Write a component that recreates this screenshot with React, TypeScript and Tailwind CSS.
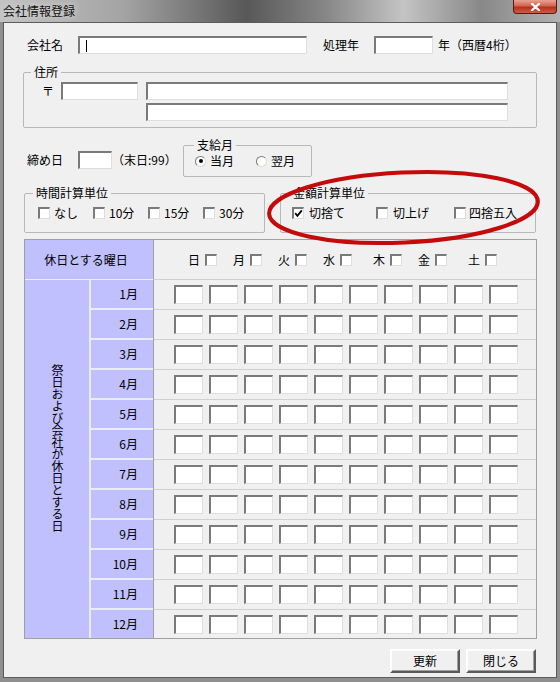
import React from 'react';

const sunken = "bg-white border-t-2 border-l-2 border-r border-b border-t-[#7a7a7a] border-l-[#7a7a7a] border-r-[#dedede] border-b-[#dedede]";

const Box = ({ className = '' }: { className?: string }) => <div className={`${sunken} ${className}`} />;

const Check = ({ checked = false }: { checked?: boolean }) => (
    <div className={`${sunken} w-[12px] h-[12px] flex items-center justify-center shrink-0`}>
        {checked && (
            <svg width="9" height="9" viewBox="0 0 9 9">
                <polyline points="1.2,4.2 3.4,6.8 7.8,1.4" fill="none" stroke="#000" strokeWidth="1.8" />
            </svg>
        )}
    </div>
);

const Radio = ({ checked = false }: { checked?: boolean }) => (
    <div className="w-[11px] h-[11px] rounded-full bg-white border border-t-[#7a7a7a] border-l-[#7a7a7a] border-r-[#dcdcdc] border-b-[#dcdcdc] flex items-center justify-center shrink-0">
        {checked && <div className="w-[4px] h-[4px] rounded-full bg-black" />}
    </div>
);

const Legend = ({ children, className = '' }: { children: React.ReactNode, className?: string }) => (
    <legend className={`px-[3px] h-[12px] leading-[12px] ${className}`}>{children}</legend>
);

const Button = ({ label }: { label: string }) => (
    <button className="w-[70px] h-[24px] bg-[#f0f0f0] border-2 border-t-white border-l-white border-r-[#5a5a5a] border-b-[#5a5a5a] shadow-[inset_-1px_-1px_0_#a0a0a0] text-[12px] leading-[12px]">
        {label}
    </button>
);

const weekdays = [
    { d: '日', cls: 'ml-[34px]' },
    { d: '月', cls: 'ml-[16px]' },
    { d: '火', cls: 'ml-[16px]' },
    { d: '水', cls: 'ml-[16px]' },
    { d: '木', cls: 'ml-[21px]' },
    { d: '金', cls: 'ml-[16px]' },
    { d: '土', cls: 'ml-[21px]' },
];

const months = Array.from({ length: 12 }, (_, i) => `${i + 1}月`);

export default function App() {
    return (
        <div className="relative w-[560px] h-[682px] bg-[#8f8f8f] flex flex-col overflow-hidden font-['Noto_Sans_CJK_JP',sans-serif] text-[12px] leading-[12px] text-black">
            {/* Title bar */}
            <div className="h-[22px] flex items-start justify-between bg-[linear-gradient(90deg,#c2c2c2_0%,#a4a4a4_22%,#585858_44%,#868686_58%,#c4c4c4_72%,#888888_86%,#b2b2b2_100%)]">
                <span className="ml-[3px] mt-[4px] text-[12px] leading-[14px] text-[#111] [text-shadow:0_0_6px_#ececec]">会社情報登録</span>
                <div className="mr-[3px] w-[44px] h-[14px] rounded-b-[4px] border border-t-0 border-[#5a1a12] bg-[linear-gradient(180deg,#e9a392_0%,#d4644e_45%,#b9301e_55%,#cc5c42_100%)] flex items-center justify-center">
                    <svg width="11" height="8" viewBox="0 0 11 8">
                        <path d="M2 0.8 L9 7.2 M9 0.8 L2 7.2" stroke="#fff" strokeWidth="2.2" strokeLinecap="round" />
                    </svg>
                </div>
            </div>

            {/* Client area */}
            <div className="mx-[3px] h-[656px] border border-[#5c5c5c] bg-[#f0f0f0] flex flex-col">
                {/* Company name row */}
                <div className="flex items-center mt-[13px] pl-[23px] h-[18px]">
                    <span className="w-[51px]">会社名</span>
                    <div className={`${sunken} w-[229px] h-[18px] flex items-center`}>
                        <span className="ml-[6px] w-px h-[12px] bg-black" />
                    </div>
                    <span className="ml-[16px] w-[51px]">処理年</span>
                    <Box className="w-[59px] h-[18px]" />
                    <span className="ml-[5px]">年（西暦4桁）</span>
                </div>

                {/* Address */}
                <fieldset className="ml-[19px] mt-[12px] w-[514px] border border-[#b8b8b8] rounded-[2px] pb-[6px]">
                    <Legend className="ml-[7px]">住所</Legend>
                    <div className="flex items-start mt-[4px]">
                        <div className="flex items-center">
                            <span className="ml-[18px] w-[19px]">〒</span>
                            <Box className="w-[77px] h-[18px]" />
                        </div>
                        <div className="ml-[8px] flex flex-col gap-[3px]">
                            <Box className="w-[362px] h-[18px]" />
                            <Box className="w-[362px] h-[18px]" />
                        </div>
                    </div>
                </fieldset>

                {/* Closing day + pay month */}
                <div className="flex items-start mt-[11px] pl-[23px]">
                    <div className="flex items-center mt-[12px] h-[18px]">
                        <span className="w-[51px]">締め日</span>
                        <Box className="w-[34px] h-[18px]" />
                        <span className="w-[71px]">（末日:99）</span>
                    </div>
                    <fieldset className="w-[129px] border border-[#b8b8b8] rounded-[2px] pb-[9px]">
                        <Legend className="ml-[10px]">支給月</Legend>
                        <div className="flex items-center mt-[4px] pl-[11px] h-[12px]">
                            <div className="flex items-center gap-[4px]">
                                <Radio checked />
                                <span>当月</span>
                            </div>
                            <div className="flex items-center gap-[4px] ml-[22px]">
                                <Radio />
                                <span>翌月</span>
                            </div>
                        </div>
                    </fieldset>
                </div>

                {/* Calculation units */}
                <div className="flex mt-[10px]">
                    <fieldset className="ml-[20px] w-[241px] border border-[#b8b8b8] rounded-[2px] pb-[13px]">
                        <Legend className="ml-[8px]">時間計算単位</Legend>
                        <div className="flex items-center mt-[8px] pl-[13px] h-[12px]">
                            {['なし', '10分', '15分', '30分'].map((t) => (
                                <div key={t} className="flex items-center gap-[4px] w-[55px]">
                                    <Check />
                                    <span>{t}</span>
                                </div>
                            ))}
                        </div>
                    </fieldset>
                    <fieldset className="ml-[15px] w-[256px] border border-[#b8b8b8] rounded-[2px] pb-[13px]">
                        <Legend className="ml-[9px]">金額計算単位</Legend>
                        <div className="flex items-center mt-[8px] pl-[11px] h-[12px]">
                            <div className="flex items-center gap-[5px] w-[84px]">
                                <Check checked />
                                <span>切捨て</span>
                            </div>
                            <div className="flex items-center gap-[5px] w-[78px]">
                                <Check />
                                <span>切上げ</span>
                            </div>
                            <div className="flex items-center gap-[3px]">
                                <Check />
                                <span>四捨五入</span>
                            </div>
                        </div>
                    </fieldset>
                </div>

                {/* Holiday table */}
                <div className="mt-[6px] ml-[20px] w-[513px] h-[400px] border border-[#a0a0a0] flex flex-col">
                    <div className="flex h-[40px]">
                        <div className="w-[128px] bg-[#c0c0ff] border-b border-[#eeeefa] flex items-center justify-center pr-[6px]">
                            休日とする曜日
                        </div>
                        <div className="flex-1 border-l border-[#a0a0a0] border-b border-b-[#d0d0d0] flex items-center">
                            {weekdays.map((w) => (
                                <div key={w.d} className={`flex items-center gap-[5px] ${w.cls}`}>
                                    <span className="w-[12px]">{w.d}</span>
                                    <Check />
                                </div>
                            ))}
                        </div>
                    </div>
                    <div className="flex flex-1">
                        <div className="w-[64px] bg-[#c0c0ff] flex items-center justify-center pb-[22px]">
                            <span className="[writing-mode:vertical-rl] leading-[12px]">祭日および会社が休日とする日</span>
                        </div>
                        <div className="w-[2px] bg-[#ececf6]" />
                        <div className="w-[62px] flex flex-col">
                            {months.map((m, i) => (
                                <div key={m} className={`bg-[#c0c0ff] flex items-center justify-end pr-[15px] ${i < 11 ? 'h-[30px] border-b-2 border-[#ececf6]' : 'h-[28px]'}`}>
                                    {m}
                                </div>
                            ))}
                        </div>
                        <div className="flex-1 border-l border-[#a0a0a0] flex flex-col">
                            {months.map((m, i) => (
                                <div key={m} className={`flex items-center pl-[20px] gap-[6px] ${i < 11 ? 'h-[30px] border-b border-[#d0d0d0]' : 'h-[28px]'}`}>
                                    {Array.from({ length: 10 }, (_, j) => (
                                        <Box key={j} className="w-[29px] h-[19px]" />
                                    ))}
                                </div>
                            ))}
                        </div>
                    </div>
                </div>

                {/* Buttons */}
                <div className="flex justify-end gap-[6px] mt-[10px] pr-[20px]">
                    <Button label="更新" />
                    <Button label="閉じる" />
                </div>
            </div>

            {/* Red annotation ellipse */}
            <svg className="absolute left-0 top-0 pointer-events-none" width="560" height="682">
                <ellipse cx="403.5" cy="207.5" rx="134.5" ry="35" fill="none" stroke="#c40a0a" strokeWidth="4" transform="rotate(-2.7 403.5 207.5)" />
            </svg>
        </div>
    );
}
